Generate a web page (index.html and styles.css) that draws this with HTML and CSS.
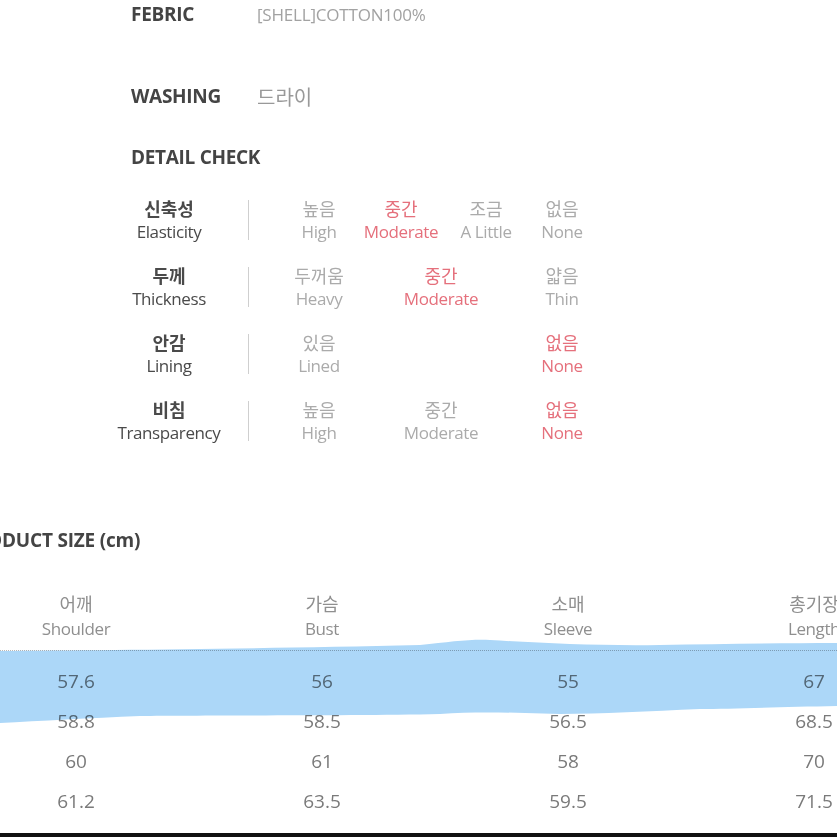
FILE: index.html
```html
<!DOCTYPE html>
<html lang="ko">
<head>
  <meta charset="UTF-8" />
  <meta name="viewport" content="width=device-width, initial-scale=1.0"/>
  <title>Product Detail</title>
  <link rel="stylesheet" href="styles.css">
</head>
<body>
  <div class="page">
    <div class="info">
      <div class="info-row febric">
        <span class="info-key">FEBRIC</span>
        <span class="info-val">[SHELL]COTTON100%</span>
      </div>
      <div class="info-row washing">
        <span class="info-key">WASHING</span>
        <span class="info-val kr">드라이</span>
      </div>
      <div class="info-key detail-title">DETAIL CHECK</div>
    </div>

    <div class="check">
      <div class="check-row">
        <div class="check-label"><b>신축성</b><span>Elasticity</span></div>
        <div class="divider"></div>
        <div class="opts">
          <div class="opt"><span>높음</span><span>High</span></div>
          <div class="opt on"><span>중간</span><span>Moderate</span></div>
          <div class="opt"><span>조금</span><span>A Little</span></div>
          <div class="opt"><span>없음</span><span>None</span></div>
        </div>
      </div>
      <div class="check-row">
        <div class="check-label"><b>두께</b><span>Thickness</span></div>
        <div class="divider"></div>
        <div class="opts">
          <div class="opt"><span>두꺼움</span><span>Heavy</span></div>
          <div class="opt on wide"><span>중간</span><span>Moderate</span></div>
          <div class="opt"><span>얇음</span><span>Thin</span></div>
        </div>
      </div>
      <div class="check-row">
        <div class="check-label"><b>안감</b><span>Lining</span></div>
        <div class="divider"></div>
        <div class="opts">
          <div class="opt"><span>있음</span><span>Lined</span></div>
          <div class="opt wide"></div>
          <div class="opt on"><span>없음</span><span>None</span></div>
        </div>
      </div>
      <div class="check-row">
        <div class="check-label"><b>비침</b><span>Transparency</span></div>
        <div class="divider"></div>
        <div class="opts">
          <div class="opt"><span>높음</span><span>High</span></div>
          <div class="opt wide"><span>중간</span><span>Moderate</span></div>
          <div class="opt on"><span>없음</span><span>None</span></div>
        </div>
      </div>
    </div>

    <h2 class="size-title">PRODUCT SIZE (cm)</h2>

    <div class="size">
      <div class="size-head">
        <div class="cell"><span class="kr">어깨</span><span>Shoulder</span></div>
        <div class="cell"><span class="kr">가슴</span><span>Bust</span></div>
        <div class="cell"><span class="kr">소매</span><span>Sleeve</span></div>
        <div class="cell"><span class="kr">총기장</span><span>Length</span></div>
      </div>
      <div class="size-body">
        <div class="size-row"><span>57.6</span><span>56</span><span>55</span><span>67</span></div>
        <div class="size-row"><span>58.8</span><span>58.5</span><span>56.5</span><span>68.5</span></div>
        <div class="size-row"><span>60</span><span>61</span><span>58</span><span>70</span></div>
        <div class="size-row"><span>61.2</span><span>63.5</span><span>59.5</span><span>71.5</span></div>
      </div>
      <!-- marker stroke drawn over the first size row -->
      <svg class="marker" width="837" height="90" viewBox="0 0 837 90">
        <path d="M0 10 C100 9 250 8 420 4 C450 1 470 -2 490 -1 C540 2 600 5 660 4 C720 3 780 2 837 2 L837 65 C780 66 730 68 700 68 C650 70 600 73 560 73 C520 72 480 70 440 73 C350 75 200 74 140 75 C90 77 40 80 0 82 Z" />
      </svg>
    </div>

    <div class="bottom-bar"></div>
  </div>
</body>
</html>
```

FILE: styles.css
```css
* {
  margin: 0;
  padding: 0;
  box-sizing: border-box;
}

body {
  font-family: "Open Sans", "Noto Sans CJK KR", sans-serif;
  background: #fff;
  overflow: hidden;
}

.page {
  position: relative;
  width: 837px;
  height: 837px;
  overflow: hidden;
  display: flex;
  flex-direction: column;
}

.kr {
  font-family: "Noto Sans CJK KR", sans-serif;
}

/* top info block */
.info {
  padding-left: 131px;
}

.info-row {
  display: flex;
  align-items: center;
  height: 28px;
}

.info-key {
  width: 126px;
  font-size: 19px;
  font-weight: 700;
  color: #444;
  letter-spacing: -0.3px;
}

.info-val {
  font-size: 17px;
  color: #a2a2a2;
  letter-spacing: -0.2px;
}

.info-val.kr {
  font-size: 20px;
  color: #999;
  letter-spacing: 0;
}

.washing {
  margin-top: 54px;
}

.detail-title {
  width: auto;
  height: 28px;
  line-height: 28px;
  margin-top: 33px;
}

/* detail check grid */
.check {
  padding-left: 109px;
  margin-top: 26px;
  display: flex;
  flex-direction: column;
  gap: 21px;
}

.check-row {
  display: flex;
  align-items: center;
  height: 46px;
}

.check-label {
  width: 120px;
  display: flex;
  flex-direction: column;
  align-items: center;
  line-height: 23px;
  color: #4a4a4a;
  white-space: nowrap;
}

.check-label b {
  font-family: "Noto Sans CJK KR", sans-serif;
  font-size: 18px;
  font-weight: 700;
}

.check-label span {
  font-size: 17px;
  letter-spacing: -0.4px;
}

.divider {
  width: 1px;
  height: 40px;
  margin-left: 19px;
  background: #cfcfcf;
}

.opts {
  margin-left: 30px;
  display: grid;
  grid-template-columns: 80px 84px 86px 66px;
}

.opt {
  display: flex;
  flex-direction: column;
  align-items: center;
  line-height: 23px;
  color: #ababab;
  font-size: 17px;
  letter-spacing: -0.4px;
  white-space: nowrap;
}

.opt span:first-child {
  font-family: "Noto Sans CJK KR", sans-serif;
  font-size: 18px;
  letter-spacing: 0;
}

.opt.wide {
  grid-column: span 2;
  padding-right: 6px;
}

.opt.on {
  color: #e5707c;
}

/* product size */
.size-title {
  margin-top: 82px;
  margin-left: -37px;
  height: 28px;
  line-height: 28px;
  font-size: 19px;
  font-weight: 700;
  color: #444;
  letter-spacing: -0.2px;
  white-space: nowrap;
}

.size {
  position: relative;
  margin-top: 37px;
  margin-left: -47px;
  width: 984px;
}

.size-head {
  display: grid;
  grid-template-columns: repeat(4, 246px);
  padding-bottom: 9px;
  border-bottom: 1px dotted #b8b8b8;
}

.cell {
  display: flex;
  flex-direction: column;
  align-items: center;
  line-height: 25px;
  font-size: 17px;
  color: #8f8f8f;
  letter-spacing: -0.4px;
  white-space: nowrap;
}

.cell .kr {
  font-size: 18px;
  letter-spacing: 0;
}

.size-body {
  padding-top: 10px;
}

.size-row {
  display: grid;
  grid-template-columns: repeat(4, 246px);
  height: 40px;
  align-items: center;
  text-align: center;
  font-size: 19px;
  color: #7a7a7a;
}

.marker {
  position: absolute;
  left: 47px;
  top: 50px;
  mix-blend-mode: multiply;
  overflow: visible;
}

.marker path {
  fill: #acd7f8;
}

.bottom-bar {
  margin-top: auto;
  height: 4px;
  background: #111;
}
```
